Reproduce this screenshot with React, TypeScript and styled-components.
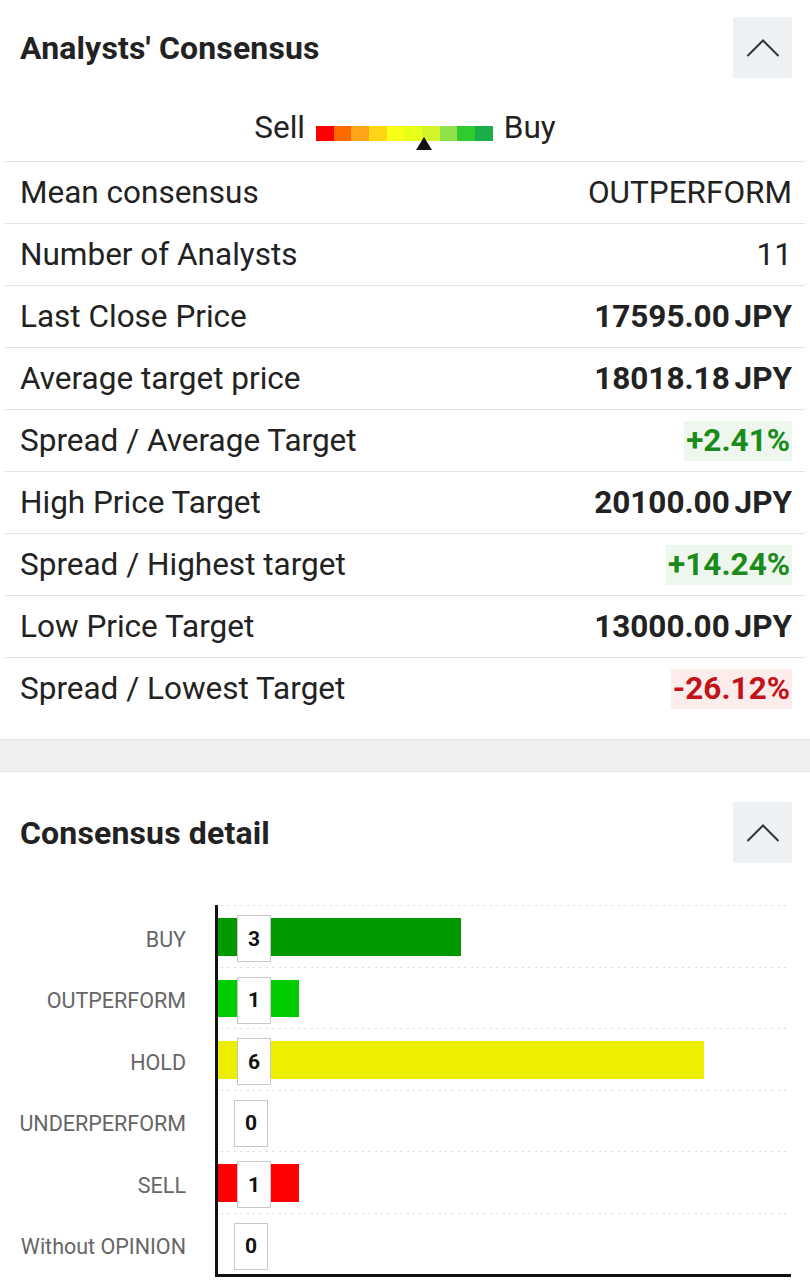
import React from "react";
import styled, { createGlobalStyle } from "styled-components";

const GlobalStyle = createGlobalStyle`
  html, body { margin: 0; padding: 0; background: #fff; }
  body {
    font-family: Roboto, "Noto Sans", "Liberation Sans", Arial, sans-serif;
    color: #222;
  }
  * { box-sizing: border-box; }
`;

const Page = styled.div`
  display: flex;
  flex-direction: column;
  width: 810px;
  min-height: 1282px;
  background: #f0f0f0;
`;

const Card = styled.section<{ $first?: boolean }>`
  background: #fff;
  ${(p) =>
    p.$first
      ? "border-bottom: 1px solid #e2e2e2; padding-bottom: 20px;"
      : "border-top: 1px solid #e2e2e2; margin-top: 31px; flex: 1;"}
`;

const CardHeader = styled.header<{ $top: number }>`
  display: flex;
  align-items: center;
  justify-content: space-between;
  padding: ${(p) => p.$top}px 18px 0 20px;
`;

const Title = styled.h2`
  margin: 0;
  font-size: 32px;
  font-weight: 700;
  color: #222;
  letter-spacing: 0.15px;
`;

const Toggle = styled.button`
  width: 59px;
  height: 61px;
  border: 0;
  padding: 0;
  background: #eef1f4;
  display: flex;
  align-items: center;
  justify-content: center;
`;

const Gauge = styled.div`
  display: flex;
  justify-content: center;
  align-items: flex-start;
  gap: 11px;
  margin-top: 32px;
  height: 36px;
  font-size: 31.5px;
  line-height: 36px;
  color: #222;
`;

const Scale = styled.div`
  position: relative;
  display: flex;
  margin-top: 16px;
`;

const Segment = styled.span<{ $c: string }>`
  width: 17.7px;
  height: 15px;
  background: ${(p) => p.$c};
`;

const Marker = styled.span`
  position: absolute;
  left: calc(60% - 6px);
  top: 11px;
  width: 0;
  height: 0;
  border-left: 8px solid transparent;
  border-right: 8px solid transparent;
  border-bottom: 13px solid #111;
`;

const Table = styled.div`
  margin: 15px 5px 0;
`;

const Row = styled.div`
  display: flex;
  justify-content: space-between;
  align-items: center;
  height: 62px;
  border-top: 1px solid #e4e4e4;
  padding: 0 13px 0 15px;
  font-size: 31.5px;
  line-height: 36px;
  color: #222;
`;

const Value = styled.span<{ $bold?: boolean }>`
  font-weight: ${(p) => (p.$bold ? 700 : 400)};
  word-spacing: ${(p) => (p.$bold ? "-3px" : "0")};
  white-space: nowrap;
`;

const Change = styled.span<{ $tone: "up" | "down" }>`
  font-weight: 700;
  line-height: 40px;
  padding: 0 2px;
  color: ${(p) => (p.$tone === "up" ? "#1a8a1a" : "#c0141a")};
  background: ${(p) => (p.$tone === "up" ? "#eef7ee" : "#fdecec")};
`;

const Chart = styled.div`
  display: grid;
  grid-template-columns: 186px 1fr;
  column-gap: 29px;
  margin: 42px 19px 0 0;
`;

const CategoryLabel = styled.div`
  height: 61.5px;
  display: flex;
  align-items: center;
  justify-content: flex-end;
  padding-top: 7px;
  font-size: 21.5px;
  color: #666;
  white-space: nowrap;
`;

const PlotCell = styled.div<{ $last?: boolean }>`
  position: relative;
  height: ${(p) => (p.$last ? 64.5 : 61.5)}px;
  border-left: 3px solid #111;
  ${(p) => (p.$last ? "border-bottom: 3px solid #111;" : "")}
  padding-top: 13px;

  &::before {
    content: "";
    position: absolute;
    top: 0;
    left: 3px;
    right: 4px;
    height: 1px;
    background: repeating-linear-gradient(
      to right,
      #dadada 0 2px,
      transparent 2px 6.4px
    );
  }
`;

const Bar = styled.div<{ $c: string }>`
  height: 37.5px;
  background: ${(p) => p.$c};
`;

const ValueBox = styled.span<{ $zero?: boolean }>`
  position: absolute;
  left: ${(p) => (p.$zero ? 16 : 19)}px;
  top: 10px;
  width: 34px;
  height: 47px;
  border: 1px solid #c8c8c8;
  background: #fff;
  display: flex;
  align-items: center;
  justify-content: center;
  font-size: 21px;
  font-weight: 700;
  color: #111;
`;

const ChevronUp = () => (
  <svg width="34" height="18" viewBox="0 0 34 18" fill="none">
    <polyline
      points="1.5,17 17,1.5 32.5,17"
      stroke="#333"
      strokeWidth="2"
      strokeLinejoin="miter"
    />
  </svg>
);

const SEGMENTS = [
  "#ff0000",
  "#ff6a00",
  "#ffa31a",
  "#ffd515",
  "#f6ff15",
  "#e8ff1a",
  "#d2f52a",
  "#90e24a",
  "#2ecc2e",
  "#1aad48",
];

type Line =
  | { label: string; value: string; bold?: boolean }
  | { label: string; change: string; tone: "up" | "down" };

const LINES: Line[] = [
  { label: "Mean consensus", value: "OUTPERFORM" },
  { label: "Number of Analysts", value: "11" },
  { label: "Last Close Price", value: "17595.00 JPY", bold: true },
  { label: "Average target price", value: "18018.18 JPY", bold: true },
  { label: "Spread / Average Target", change: "+2.41%", tone: "up" },
  { label: "High Price Target", value: "20100.00 JPY", bold: true },
  { label: "Spread / Highest target", change: "+14.24%", tone: "up" },
  { label: "Low Price Target", value: "13000.00 JPY", bold: true },
  { label: "Spread / Lowest Target", change: "-26.12%", tone: "down" },
];

const DETAIL = [
  { label: "BUY", count: 3, color: "#009900" },
  { label: "OUTPERFORM", count: 1, color: "#00cc00" },
  { label: "HOLD", count: 6, color: "#eeee00" },
  { label: "UNDERPERFORM", count: 0, color: "#ff7700" },
  { label: "SELL", count: 1, color: "#ff0000" },
  { label: "Without OPINION", count: 0, color: "#999999" },
];

const UNIT = 81;

export default function App() {
  return (
    <>
      <GlobalStyle />
      <Page>
        <Card $first>
          <CardHeader $top={17}>
            <Title>Analysts' Consensus</Title>
            <Toggle aria-label="Collapse">
              <ChevronUp />
            </Toggle>
          </CardHeader>
          <Gauge>
            <span>Sell</span>
            <Scale>
              {SEGMENTS.map((c) => (
                <Segment key={c} $c={c} />
              ))}
              <Marker />
            </Scale>
            <span>Buy</span>
          </Gauge>
          <Table>
            {LINES.map((l) => (
              <Row key={l.label}>
                <span>{l.label}</span>
                {"change" in l ? (
                  <Change $tone={l.tone}>{l.change}</Change>
                ) : (
                  <Value $bold={l.bold}>{l.value}</Value>
                )}
              </Row>
            ))}
          </Table>
        </Card>
        <Card>
          <CardHeader $top={30}>
            <Title>Consensus detail</Title>
            <Toggle aria-label="Collapse">
              <ChevronUp />
            </Toggle>
          </CardHeader>
          <Chart>
            {DETAIL.map((d, i) => (
              <React.Fragment key={d.label}>
                <CategoryLabel>{d.label}</CategoryLabel>
                <PlotCell $last={i === DETAIL.length - 1}>
                  {d.count > 0 && (
                    <Bar $c={d.color} style={{ width: d.count * UNIT }} />
                  )}
                  <ValueBox $zero={d.count === 0}>{d.count}</ValueBox>
                </PlotCell>
              </React.Fragment>
            ))}
          </Chart>
        </Card>
      </Page>
    </>
  );
}
